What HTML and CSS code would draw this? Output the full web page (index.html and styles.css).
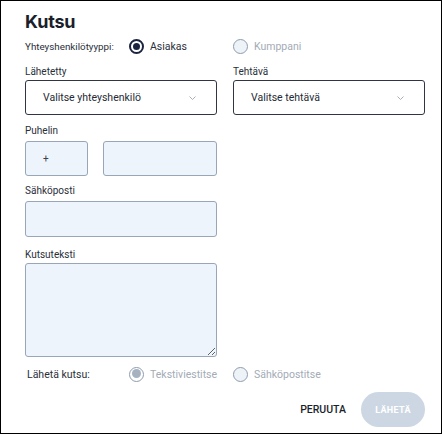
FILE: index.html
```html
<!DOCTYPE html>
<html lang="fi">
<head>
<meta charset="utf-8">
<link rel="stylesheet" href="styles.css">
</head>
<body>
<div class="dialog">
  <h1 class="title">Kutsu</h1>
  <div class="radio-row">
    <span class="row-label">Yhteyshenkilötyyppi:</span>
    <span class="opt"><span class="radio radio-on"></span><span class="opt-text">Asiakas</span></span>
    <span class="opt opt-disabled"><span class="radio radio-off"></span><span class="opt-text">Kumppani</span></span>
  </div>
  <div class="grid">
    <div class="field">
      <div class="label label-select">Lähetetty</div>
      <div class="select"><span>Valitse yhteyshenkilö</span><svg class="chev" width="7" height="4" viewBox="0 0 7 4"><path d="M0.5 0.5 L3.5 3.5 L6.5 0.5" fill="none" stroke="#a2a6ad" stroke-width="0.9"/></svg></div>
    </div>
    <div class="field">
      <div class="label label-select">Tehtävä</div>
      <div class="select"><span>Valitse tehtävä</span><svg class="chev" width="7" height="4" viewBox="0 0 7 4"><path d="M0.5 0.5 L3.5 3.5 L6.5 0.5" fill="none" stroke="#a2a6ad" stroke-width="0.9"/></svg></div>
    </div>
  </div>
  <div class="field field-phone">
    <div class="label">Puhelin</div>
    <div class="phone">
      <div class="input input-code">+</div>
      <div class="input input-num"></div>
    </div>
  </div>
  <div class="field field-email">
    <div class="label">Sähköposti</div>
    <div class="input input-email"></div>
  </div>
  <div class="field field-text">
    <div class="label label-text">Kutsuteksti</div>
    <textarea class="textarea"></textarea>
  </div>
  <div class="radio-row radio-row-send">
    <span class="row-label row-label-send">Lähetä kutsu:</span>
    <span class="opt opt-disabled"><span class="radio radio-dis-on"></span><span class="opt-text">Tekstiviestitse</span></span>
    <span class="opt opt-disabled"><span class="radio radio-off"></span><span class="opt-text">Sähköpostitse</span></span>
  </div>
  <div class="actions">
    <button class="btn-text">PERUUTA</button>
    <button class="btn-primary">LÄHETÄ</button>
  </div>
</div>
</body>
</html>
```
FILE: styles.css
```css
* { box-sizing: border-box; }
html, body { margin: 0; padding: 0; background: #fff; }
body { font-family: Roboto, "Liberation Sans", Arial, sans-serif; color: #1f2430; }
.dialog {
  width: 442px;
  height: 434px;
  border: 1px solid #000;
  padding: 10px 16px 0 24px;
  display: flex;
  flex-direction: column;
}
.title {
  margin: 0;
  font-family: Inter, Roboto, sans-serif;
  font-size: 18px;
  line-height: 22px;
  font-weight: 700;
  color: #1a1f2b;
  letter-spacing: -0.2px;
}
.radio-row {
  display: grid;
  grid-template-columns: 104px 104px 1fr;
  align-items: center;
  height: 16px;
  margin-top: 5px;
}
.row-label { color: #2a2f3a; font-size: 9.8px; }
.opt { display: flex; align-items: center; gap: 6px; font-size: 10.5px; color: #2a2f3a; }
.opt-disabled .opt-text { color: #a3abb6; }
.radio {
  width: 15px; height: 15px; border-radius: 50%;
  display: inline-block; position: relative; flex: none;
}
.radio-on { border: 2px solid #1c2540; background: #fff; }
.radio-on::after {
  content: ""; position: absolute; left: 2px; top: 2px;
  width: 7px; height: 7px; border-radius: 50%; background: #1c2540;
}
.radio-off { border: 1.5px solid #8e9cb0; background: #eef3f8; }
.radio-dis-on { border: 1.5px solid #8e9cb0; background: #fff; }
.radio-dis-on::after {
  content: ""; position: absolute; left: 1.5px; top: 1.5px;
  width: 9px; height: 9px; border-radius: 50%; background: #a7b2c1;
}
.grid {
  display: grid;
  grid-template-columns: 192px 192px;
  column-gap: 16px;
  margin-top: 12px;
}
.label { font-size: 10px; line-height: 12px; color: #2a2f3a; margin-bottom: 4px; }
.label-select { margin-bottom: 2px; }
.label-text { margin-bottom: 2px; }
.select {
  height: 35px;
  border: 1px solid #2f3542;
  border-radius: 3px;
  background: #fff;
  display: flex;
  align-items: center;
  justify-content: space-between;
  padding: 0 20px 0 17px;
  font-size: 10.5px;
  color: #262b36;
}
.chev { margin-top: 1px; }
.field-phone { margin-top: 10px; }
.phone { display: flex; gap: 15px; }
.input {
  height: 35px;
  border: 1px solid #98a6b8;
  border-radius: 3px;
  background: #edf4fb;
}
.input-code { width: 63px; display: flex; align-items: center; padding-left: 17px; font-size: 10px; color: #3a4050; }
.input-num { width: 114px; }
.field-email { margin-top: 9px; }
.input-email { width: 192px; height: 36px; }
.field-text { margin-top: 12px; }
.textarea {
  display: block;
  width: 192px;
  height: 94px;
  margin: 0;
  border: 1px solid #98a6b8;
  border-radius: 3px;
  background: #edf4fb;
  resize: vertical;
  font: inherit;
}
.radio-row-send { margin-top: 9px; }
.row-label-send { padding-left: 2px; font-size: 10.5px; }
.actions {
  display: flex;
  justify-content: flex-end;
  align-items: center;
  gap: 15px;
  margin-top: 10px;
}
.btn-text {
  border: 0; background: none; padding: 0;
  font-family: inherit; font-size: 10.5px; font-weight: 500; color: #1a1f2b;
}
.btn-primary {
  border: 0;
  width: 64px; height: 35px;
  border-radius: 18px;
  background: #cdd7e3;
  color: #fff;
  font-family: inherit; font-size: 9px; font-weight: 700;
  letter-spacing: 0.3px;
}
```
